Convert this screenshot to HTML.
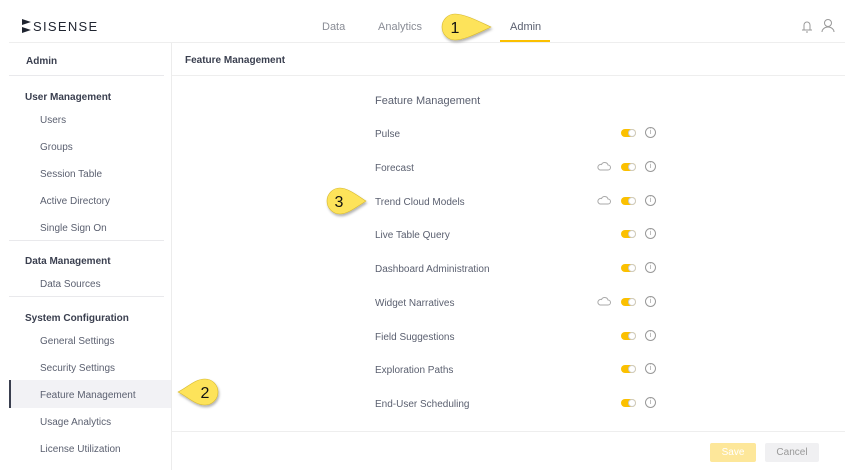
<!DOCTYPE html>
<html><head><style>
*{margin:0;padding:0;box-sizing:border-box}
body{width:845px;height:470px;overflow:hidden;background:#fff;font-family:"Liberation Sans",sans-serif;font-size:10px;color:#5b6070;position:relative}
.a{position:absolute;white-space:nowrap}
.t{margin-top:1px}
.b{font-weight:bold;color:#3a3f4f}
.hl{position:absolute;background:#e9e9ec;height:1px}
.tg{position:absolute;width:15px;height:8px;border-radius:4px;background:#fbc000}
.tg:after{content:"";position:absolute;right:0;top:0;width:8px;height:8px;border-radius:50%;background:#fff;border:1px solid #ccc;box-sizing:border-box}
.inf{position:absolute;width:11px;height:11px;border:1px solid #999;border-radius:50%;font-size:7px;line-height:9px;text-align:center;color:#999}
</style></head><body>
<svg class="a" style="left:22px;top:19px" width="82" height="14">
<polygon points="0,0 9,3 0,6" fill="#1f2430"/><polygon points="0,8 9,11 0,14" fill="#1f2430"/>
<text x="11" y="12" font-family="Liberation Sans" font-size="13" fill="#1f2430" letter-spacing="1.3">SISENSE</text></svg>
<div class="a" style="left:322px;top:21px;font-size:11px;color:#8a8d96">Data</div>
<div class="a" style="left:378px;top:21px;font-size:11px;color:#8a8d96">Analytics</div>
<div class="a" style="left:510px;top:21px;font-size:11px;color:#5b6070">Admin</div>
<div class="a" style="left:500px;top:40px;width:50px;height:2px;background:#fbc000"></div>
<svg class="a" style="left:800px;top:19px" width="36" height="14"><path d="M2 11h10M4 11V6a3 3 0 0 1 6 0v5M6 13h2" stroke="#999" fill="none"/><circle cx="28" cy="4" r="3.5" stroke="#999" fill="none"/><path d="M22 13a6 5 0 0 1 12 0" stroke="#999" fill="none"/></svg>
<div class="hl" style="left:9px;top:42px;width:836px;background:#eee"></div>
<div class="a" style="left:171px;top:43px;width:1px;height:427px;background:#ececec"></div>
<div class="a b" style="left:26px;top:56px">Admin</div>
<div class="hl" style="left:9px;top:75px;width:155px"></div>
<div class="a b" style="left:185px;top:55px">Feature Management</div>
<div class="hl" style="left:172px;top:75px;width:673px;background:#eee"></div>
<div class="a b" style="left:25px;top:92px">User Management</div>
<div class="a" style="left:40px;top:115px">Users</div>
<div class="a" style="left:40px;top:142px">Groups</div>
<div class="a" style="left:40px;top:169px">Session Table</div>
<div class="a" style="left:40px;top:196px">Active Directory</div>
<div class="a" style="left:40px;top:223px">Single Sign On</div>
<div class="hl" style="left:9px;top:240px;width:155px"></div>
<div class="a b" style="left:25px;top:256px">Data Management</div>
<div class="a" style="left:40px;top:279px">Data Sources</div>
<div class="hl" style="left:9px;top:296px;width:155px"></div>
<div class="a b" style="left:25px;top:313px">System Configuration</div>
<div class="a" style="left:40px;top:336px">General Settings</div>
<div class="a" style="left:40px;top:363px">Security Settings</div>
<div class="a" style="left:9px;top:380px;width:162px;height:28px;background:#f2f2f5;border-left:2px solid #3a3f4f"></div>
<div class="a" style="left:40px;top:390px">Feature Management</div>
<div class="a" style="left:40px;top:417px">Usage Analytics</div>
<div class="a" style="left:40px;top:444px">License Utilization</div>
<div class="a" style="left:375px;top:95px;font-size:11px">Feature Management</div>
<div class="a" style="left:375px;top:129px">Pulse</div>
<div class="a" style="left:375px;top:163px">Forecast</div>
<div class="a" style="left:375px;top:197px">Trend Cloud Models</div>
<div class="a" style="left:375px;top:230px">Live Table Query</div>
<div class="a" style="left:375px;top:264px">Dashboard Administration</div>
<div class="a" style="left:375px;top:298px">Widget Narratives</div>
<div class="a" style="left:375px;top:332px">Field Suggestions</div>
<div class="a" style="left:375px;top:365px">Exploration Paths</div>
<div class="a" style="left:375px;top:399px">End-User Scheduling</div>
<div class="tg" style="left:621px;top:129px"></div><div class="inf" style="left:645px;top:127px">i</div>
<div class="tg" style="left:621px;top:163px"></div><div class="inf" style="left:645px;top:161px">i</div>
<div class="tg" style="left:621px;top:197px"></div><div class="inf" style="left:645px;top:195px">i</div>
<div class="tg" style="left:621px;top:230px"></div><div class="inf" style="left:645px;top:228px">i</div>
<div class="tg" style="left:621px;top:264px"></div><div class="inf" style="left:645px;top:262px">i</div>
<div class="tg" style="left:621px;top:298px"></div><div class="inf" style="left:645px;top:296px">i</div>
<div class="tg" style="left:621px;top:332px"></div><div class="inf" style="left:645px;top:330px">i</div>
<div class="tg" style="left:621px;top:365px"></div><div class="inf" style="left:645px;top:363px">i</div>
<div class="tg" style="left:621px;top:399px"></div><div class="inf" style="left:645px;top:397px">i</div>
<svg class="a" style="left:597px;top:162px" width="14" height="9"><path d="M3 8h8a2.5 2.5 0 0 0 0-5a3.5 3.5 0 0 0-6.5-.5A2.8 2.8 0 0 0 3 8z" stroke="#aaa" fill="none"/></svg>
<svg class="a" style="left:597px;top:196px" width="14" height="9"><path d="M3 8h8a2.5 2.5 0 0 0 0-5a3.5 3.5 0 0 0-6.5-.5A2.8 2.8 0 0 0 3 8z" stroke="#aaa" fill="none"/></svg>
<svg class="a" style="left:597px;top:297px" width="14" height="9"><path d="M3 8h8a2.5 2.5 0 0 0 0-5a3.5 3.5 0 0 0-6.5-.5A2.8 2.8 0 0 0 3 8z" stroke="#aaa" fill="none"/></svg>
<div class="hl" style="left:172px;top:431px;width:673px;background:#eee"></div>
<div class="a" style="left:710px;top:443px;width:46px;height:19px;background:#fde79a;color:#fff;text-align:center;line-height:19px;border-radius:2px">Save</div>
<div class="a" style="left:765px;top:443px;width:54px;height:19px;background:#f0f0f2;color:#999;text-align:center;line-height:19px;border-radius:2px">Cancel</div>
<svg class="a" style="left:0;top:0" width="845" height="470">
<defs><filter id="s"><feDropShadow dx="1" dy="2" stdDeviation="1.2" flood-opacity="0.3"/></filter></defs>
<g filter="url(#s)" fill="#fde35a" stroke="#d6b82e" stroke-width="0.6">
<path d="M455 14a13 13 0 1 0 0 26c10 0 25-8 36-13c-11-5-26-13-36-13z"/>
<path d="M205 379a13 13 0 1 1 0 26c-10 0-17-8-27-13c10-5 17-13 27-13z"/>
<path d="M340 188a13 13 0 1 0 0 26c8 0 18-8 26-13c-8-5-18-13-26-13z"/>
</g>
<g font-family="Liberation Sans" font-size="16" fill="#111" text-anchor="middle">
<text x="455" y="33">1</text><text x="205" y="398">2</text><text x="339" y="207">3</text></g>
</svg>
</body></html>
